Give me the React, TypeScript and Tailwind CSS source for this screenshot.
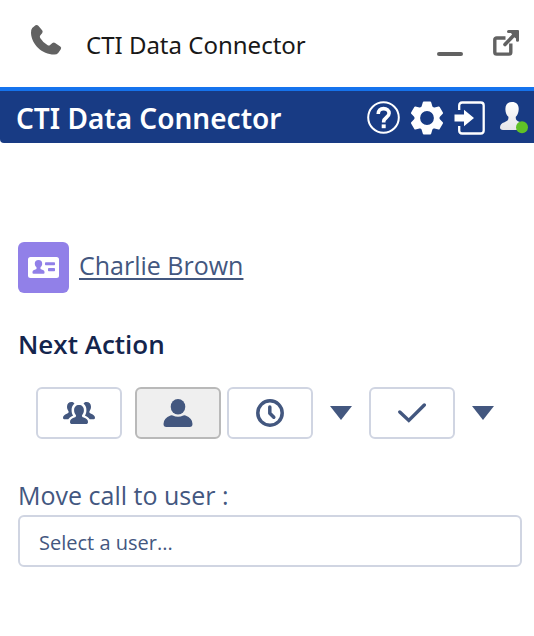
import { ReactNode } from "react";

interface ActionButtonProps {
  label: string;
  selected?: boolean;
  children: ReactNode;
}

function ActionButton({ label, selected, children }: ActionButtonProps) {
  return (
    <button
      type="button"
      aria-label={label}
      aria-pressed={selected}
      className={`flex h-[52px] w-[86px] items-center justify-center rounded-md border-2 ${
        selected ? "border-[#b9b9b9] bg-[#efefef]" : "border-[#d0d5e2] bg-white"
      }`}
    >
      {children}
    </button>
  );
}

function CaretButton({ label }: { label: string }) {
  return (
    <button type="button" aria-label={label} className="text-[#43577f]">
      <svg className="block" width="24" height="14" viewBox="0 0 24 14" fill="currentColor">
        <path d="M1 0h22L12 14z" />
      </svg>
    </button>
  );
}

function PhoneIcon() {
  return (
    <svg width="32" height="32" viewBox="0 0 32 32" fill="#626262">
      <path d="M2.200 4 5.500 1.300q1.500-.9 2.800.4l4 4.800q.9 1.400-.2 2.700L10.200 11.500q-.8 1.100 0 2.400 2.800 4.600 7.500 7.400 1.300.7 2.400-.3l2.300-1.900q1.300-1 2.700-.2l5.200 3.600q1.500 1.200.5 2.800l-2.600 3.600q-1.400 1.600-3.800 1.600C12 30.600 1.600 20.500 1 9q-.1-3.500 1.200-5z" />
    </svg>
  );
}

function PopOutIcon() {
  return (
    <svg width="26" height="26" viewBox="0 0 26 26" fill="none" stroke="#626262">
      <path d="M12.500 8H3.700Q1.800 8 1.800 9.800v12.500q0 1.800 1.900 1.800H16q1.800 0 1.800-1.800V13.500" strokeWidth="3.400" />
      <path d="m12 14.500 10-10.500" strokeWidth="3.600" strokeLinecap="round" />
      <path d="M15.500 0H25q1 0 1 1v9.500q0 1.300-1.500 1.300T23 10.500V8.500l-2-1.500-3-4h-2.500Q14 3 14 1.500T15.500 0z" fill="#626262" stroke="none" />
      <path d="M18 1h7v8z" fill="#626262" stroke="none" />
    </svg>
  );
}

function HelpIcon() {
  return (
    <svg width="33" height="33" viewBox="0 0 33 33" fill="none" stroke="#fff">
      <circle cx="16.5" cy="16.5" r="15.3" strokeWidth="2" />
      <path d="M11.200 13c0-3.400 2-5.400 5.400-5.400 3.100 0 5.500 1.900 5.500 4.700 0 4.200-5.400 4.100-5.400 8.200v.9" strokeWidth="3.600" />
      <path d="M14.700 23.400h4v3.800h-4z" fill="#fff" stroke="none" />
    </svg>
  );
}

function GearIcon() {
  return (
    <svg width="32" height="34" viewBox="0 0 32 34" fill="none" stroke="#fff">
      <circle cx="16" cy="17" r="9.700" strokeWidth="5.600" />
      <g fill="#fff" strokeWidth="2" strokeLinejoin="round">
        <path id="gear-tooth" d="M11 7.500 12.800 1.500h6.400L21 7.500z" />
        <use href="#gear-tooth" transform="rotate(60 16 17)" />
        <use href="#gear-tooth" transform="rotate(120 16 17)" />
        <use href="#gear-tooth" transform="rotate(180 16 17)" />
        <use href="#gear-tooth" transform="rotate(240 16 17)" />
        <use href="#gear-tooth" transform="rotate(300 16 17)" />
      </g>
    </svg>
  );
}

function LogoutIcon() {
  return (
    <svg width="31" height="34" viewBox="0 0 31 34" fill="none" stroke="#fff">
      <path d="M5.200 9V4.500q0-3 3-3h18.500q3 0 3 3v25q0 3-3 3H8.200q-3 0-3-3V25" strokeWidth="2.300" />
      <path d="M.5 13.500H10V8.800L20 17l-10 8.200v-4.700H.5z" fill="#fff" stroke="none" />
    </svg>
  );
}

function AgentIcon() {
  return (
    <svg width="33" height="33" viewBox="-4 0 33 33">
      <defs>
        <linearGradient id="agent" x2="0" y2="1">
          <stop offset="0" stopColor="#fff" />
          <stop offset="1" stopColor="#e5e5e8" />
        </linearGradient>
      </defs>
      <path d="M12 1c4.500 0 7 3 6.700 7.500-.2 3.500-1.200 5.500-2.900 7.300-.3 3 .6 4 4.200 5.200 3 1 5 2.500 5 5.500 0 1.800-1 2.400-3 2.400H3c-2 0-3-.5-3-2.300 0-3 1.500-4.400 4.500-5.400 3.200-1.200 4.200-2.200 3.900-5.400C6.500 14 5.500 12 5.400 8.500 5.200 4 7.500 1 12 1z" fill="url(#agent)" />
      <circle cx="22" cy="26.300" r="6" fill="#60c126" />
    </svg>
  );
}

function ContactIcon() {
  return (
    <svg width="31" height="21" viewBox="0 0 31 21" fill="#9180e8">
      <rect width="31" height="21" rx="2.500" fill="#fff" />
      <circle cx="10.500" cy="6.800" r="3.700" />
      <path d="M8.500 8h4v4l3 1.200q1 .5 1 1.800v1q0 .8-1 .8h-10q-1 0-1-.8v-1q0-1.300 1-1.800l3-1.200z" />
      <rect x="17" y="5.200" width="10" height="3" rx=".8" />
      <rect x="20" y="11" width="7" height="3.200" rx=".8" />
    </svg>
  );
}

function GroupIcon() {
  return (
    <svg width="32" height="24" viewBox="0 0 32 24" fill="#43577f">
      <g id="group-side">
        <path d="M8.500 1C5.700 1 4 3 4 5.800c0 2 .8 3.300 1.500 4.500.5 1.200-.2 1.800-1.700 2.500C1.500 14 0 14.800 0 16.800 0 18 .8 18.300 2 18.300h3.300c1.300-2 3-2.800 4.800-3.700-1.300-2-1.500-3.600-1.500-5.600 0-2.800.8-4.500 2.800-6.200C11 1.500 10 1 8.500 1z" />
      </g>
      <use href="#group-side" transform="translate(32 0) scale(-1 1)" />
      <path d="M16 4c-3 0-4.900 2-4.900 5.200 0 2 .8 3.500 1.700 4.700.7 1.200 0 2-1.600 2.700-2.500 1.100-4.200 2-4.200 4.300 0 1.500.8 2.100 2.200 2.100h13.600c1.400 0 2.200-.6 2.200-2.100 0-2.300-1.700-3.200-4.200-4.300-1.600-.7-2.300-1.500-1.600-2.700.9-1.200 1.700-2.700 1.700-4.700C20.900 6 19 4 16 4z" />
    </svg>
  );
}

function UserIcon() {
  return (
    <svg width="30" height="28" viewBox="0 0 30 28" fill="#43577f">
      <ellipse cx="15" cy="7.800" rx="7.300" ry="7.800" />
      <path d="M7.500 16.500q1.200-.5 2.200.1Q15 19 20.300 16.600q1-.6 2.200-.1 7 2.500 7 8.500 0 3-2.800 3H3.300Q.5 28 .5 25q0-6 7-8.500z" />
    </svg>
  );
}

function ClockIcon() {
  return (
    <svg width="28" height="28" viewBox="0 0 28 28" fill="none" stroke="#43577f" strokeWidth="3.500">
      <circle cx="14" cy="14" r="12.200" />
      <path d="M13.800 8v6.200l4 4" strokeLinecap="round" strokeLinejoin="round" />
    </svg>
  );
}

function CheckIcon() {
  return (
    <svg width="28" height="20" viewBox="0 0 28 20" fill="none" stroke="#43577f" strokeWidth="3.400">
      <path d="m1.800 9 9 8.500L26.300 2" strokeLinecap="round" />
    </svg>
  );
}

function App() {
  return (
    <div className="min-h-screen bg-white font-['Open_Sans',sans-serif] text-[#43577f]">
      <header className="flex h-[87px] items-center justify-between pr-[15px] pb-1 pl-[30px]">
        <div className="flex items-center gap-6">
          <div className="pb-1">
            <PhoneIcon />
          </div>
          <h1 className="pt-[6px] font-['Noto_Sans',sans-serif] text-2xl text-[#181818]">CTI Data Connector</h1>
        </div>
        <div className="flex items-center gap-[30px] pt-[2px]">
          <button type="button" aria-label="Minimize" className="flex h-[26px] w-[26px] items-end">
            <span className="h-1 w-full rounded-sm bg-[#626262]" />
          </button>
          <button type="button" aria-label="Pop out">
            <PopOutIcon />
          </button>
        </div>
      </header>

      <nav className="flex h-14 items-center justify-between rounded-bl-sm border-t-4 border-[#1573ed] bg-[#183b84] pt-px pr-[5px] pl-4">
        <h2 className="font-['Noto_Sans',sans-serif] text-[28px] font-semibold text-white">CTI Data Connector</h2>
        <div className="flex items-center gap-[11px]">
          <button type="button" aria-label="Help"><HelpIcon /></button>
          <button type="button" aria-label="Settings"><GearIcon /></button>
          <button type="button" aria-label="Log out"><LogoutIcon /></button>
          <button type="button" aria-label="Agent status"><AgentIcon /></button>
        </div>
      </nav>

      <main className="pt-[99px] pr-3 pl-[18px]">
        <div className="flex items-center gap-[10px]">
          <span className="flex h-[51px] w-[51px] items-center justify-center rounded-md bg-[#9180e8]">
            <ContactIcon />
          </span>
          <a href="#contact" className="pb-[6px] text-[25px] leading-8 underline decoration-2 underline-offset-3">
            Charlie Brown
          </a>
        </div>

        <h3 className="mt-[35px] text-[26px] leading-8 font-semibold text-[#14254d]">Next Action</h3>

        <div className="mt-[27px] flex items-center pl-[18px]">
          <ActionButton label="Move to queue"><GroupIcon /></ActionButton>
          <div className="ml-[13px] flex items-center gap-[6px]">
            <ActionButton label="Move to user" selected><UserIcon /></ActionButton>
            <ActionButton label="Schedule"><ClockIcon /></ActionButton>
          </div>
          <div className="ml-4 flex items-center gap-4">
            <CaretButton label="Schedule options" />
            <ActionButton label="Complete"><CheckIcon /></ActionButton>
            <CaretButton label="Complete options" />
          </div>
        </div>

        <label htmlFor="user" className="mt-10 block text-[25px] leading-8">
          Move call to user :
        </label>
        <input
          id="user"
          type="text"
          placeholder="Select a user..."
          className="mt-1 block h-[52px] w-full rounded-md border-2 border-[#d0d5e2] px-[19px] pt-[2px] text-xl placeholder:text-[#43577f]"
        />
      </main>
    </div>
  );
}

export default App;
